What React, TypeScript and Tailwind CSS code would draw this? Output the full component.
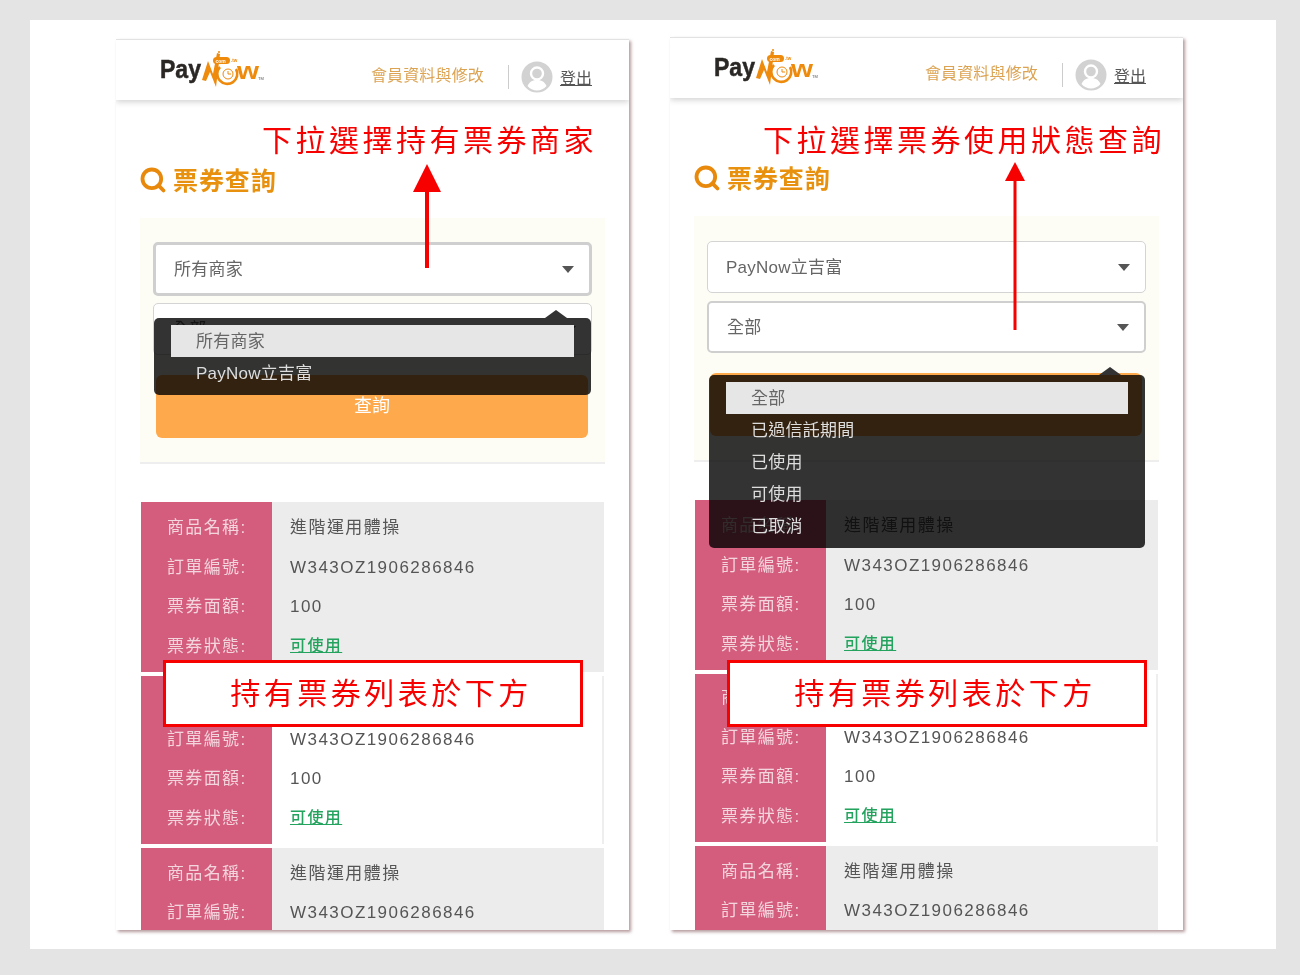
import { Search } from "lucide-react";

const cjk = "font-['Liberation_Sans','Noto_Sans_CJK_TC',sans-serif]";

function Logo() {
  return (
    <svg width="106" height="42" viewBox="0 0 106 42" className="block overflow-visible">
      <text x="0" y="30" fontFamily="Liberation Sans" fontWeight="700" fontSize="26" fill="#2a2725" stroke="#2a2725" strokeWidth="0.5" textLength="41" lengthAdjust="spacingAndGlyphs">Pay</text>
      <path d="M42 32 L48 13 L53 26 L57 5 L60 6 L56 39 L50 24 L46 33 Z" fill="#ee8a0c" />
      <path d="M60 19a10 10 0 1 0 16 2" fill="none" stroke="#ee8a0c" strokeWidth="2.6" />
      <circle cx="68" cy="26" r="5" fill="none" stroke="#ee8a0c" strokeWidth="1" />
      <path d="M68 23v3h3" fill="none" stroke="#ee8a0c" strokeWidth="1" />
      <rect x="53" y="9" width="17" height="7" rx="3.500" fill="#ee8a0c" />
      <text x="55.500" y="14.500" fontFamily="Liberation Sans" fontWeight="700" fontSize="5" fill="#fff">com</text>
      <text x="71" y="14" fontFamily="Liberation Sans" fontWeight="700" fontSize="4.500" fill="#ee8a0c">.tw</text>
      <circle cx="59" cy="4" r="1" fill="#ee8a0c" />
      <text x="77" y="31" fontFamily="Liberation Sans" fontWeight="700" fontSize="23" fill="#ee8a0c" textLength="22" lengthAdjust="spacingAndGlyphs">w</text>
      <text x="98" y="32" fontFamily="Liberation Sans" fontSize="4" fill="#555">TM</text>
    </svg>
  );
}

function Avatar() {
  return (
    <svg width="32" height="32" viewBox="0 0 32 32" className="block">
      <circle cx="16" cy="16" r="15.5" fill="#d2d2d2" />
      <circle cx="16" cy="12.5" r="6" fill="none" stroke="#fff" strokeWidth="2.4" />
      <path d="M6.5 25c2-4.500 5.500-6 9.500-6s7.500 1.500 9.500 6c-2.500 2.800-5.800 4.500-9.500 4.500S9 27.800 6.500 25Z" fill="#fff" />
    </svg>
  );
}

function Select({ label, state }: { label: string; state: "plain" | "big" | "focus" }) {
  const look =
    state === "big"
      ? "h-[54px] -mt-[1px] -mb-[1px] border-[3px] border-[#cfcfcf]"
      : state === "focus"
        ? "h-[52px] border-2 border-[#cfcfcf]"
        : "h-[52px] border border-[#d4d4d4]";
  return (
    <div className={`bg-white rounded-[5px] flex items-center justify-between pl-[18px] pr-[15px] text-[17px] tracking-[0.25px] text-[#666] ${look}`}>
      <span className="pt-[2px]">{label}</span>
      <span className="w-0 h-0 border-x-[6.5px] border-x-transparent border-t-[7px] border-t-[#555]" />
    </div>
  );
}

function Row({ k, v, link }: { k: string; v: string; link?: boolean }) {
  return (
    <div className="flex h-[39.7px] items-center">
      <div className="w-[131px] pl-[26px] text-[#f3d5dd] text-[17px] tracking-[1.35px] shrink-0">{k}:</div>
      <div className={`pl-[18px] ${link ? "text-[#23a35e] underline text-[16px] tracking-[1.4px] font-medium -mt-[2px]" : "text-[#555] text-[17px] tracking-[1.45px]"}`}>{v}</div>
    </div>
  );
}

function Card({ white, pt, clip }: { white?: boolean; pt: string; clip?: boolean }) {
  return (
    <div className={`relative ${white ? "bg-white border-r-2 border-[#eeeeee]" : "bg-[#ececec]"} ${pt} pb-[5px]`}>
      <div className="absolute left-0 top-0 bottom-0 w-[131px] bg-[#d45c7c]" />
      <div className="relative">
        <Row k="商品名稱" v="進階運用體操" />
        <Row k="訂單編號" v="W343OZ1906286846" />
        {!clip && <Row k="票券面額" v="100" />}
        {!clip && <Row k="票券狀態" v="可使用" link />}
      </div>
    </div>
  );
}

type Ann = {
  heading: string;
  headLeft: string;
  headTop: string;
  arrowLeft: string;
  head: number;
  shaft: string;
  ddLeft: string;
  ddTop: string;
  ddW: string;
  items: string[];
  boxLeft: string;
  boxTop: string;
  focusFirst?: boolean;
  first: string;
  second: string;
  frame: string;
};

function Phone(p: Ann) {
  const big = p.head === 28;
  return (
    <div className={`relative w-[513px] bg-white overflow-hidden shadow-[2px_2px_3px_rgba(140,100,105,0.65)] border-t border-[#e2e2e2] ${p.frame} ${cjk}`}>
      <header className="h-[60px] flex items-center pl-[44px] pr-[37px] shadow-[0_2px_6px_rgba(0,0,0,0.18)] relative">
        <div className="-mt-[2px]"><Logo /></div>
        <div className="ml-auto flex items-center mt-[14px]">
          <span className="text-[16px] tracking-[0.15px] text-[#dca352] -mt-[3px]">會員資料與修改</span>
          <span className="w-px h-[24px] bg-[#cccccc] ml-[24px] mr-[12px]" />
          <Avatar />
          <span className="ml-[7px] text-[16px] text-[#555] underline pt-[3px]">登出</span>
        </div>
      </header>
      <div className="h-[118px] pl-[24px] pt-[65px] flex items-start gap-[6px]">
        <Search size={28} strokeWidth={3.3} color="#e8890c" className="-ml-[1px] mt-[1px]" />
        <h1 className="text-[25px] leading-[32px] font-bold text-[#e8910f] tracking-[0.9px]">票券查詢</h1>
      </div>
      <section className="mx-[24px] bg-[#fdfdf5] border-b-2 border-[#eeeeee] px-[13px] pt-[25px] pb-[24px]">
        <Select label={p.first} state={p.focusFirst ? "big" : "plain"} />
        <div className="h-[8px]" />
        <Select label={p.second} state={p.focusFirst ? "plain" : "focus"} />
        <button className="mt-[20px] mx-[3px] w-[432px] h-[63px] rounded-[6px] bg-[#ffa94d] text-white text-[18px]">查詢</button>
      </section>
      <div className="mt-[38px] mx-[25px]">
        <Card pt="pt-[6px]" />
        <div className="h-[4px]" />
        <Card white pt="pt-[4px]" />
        <div className="h-[4px]" />
        <Card pt="pt-[6px]" clip />
      </div>

      <div className={`absolute ${p.headLeft} ${p.headTop} text-[#f60000] text-[30px] leading-[36px] tracking-[3.5px] whitespace-nowrap font-['Noto_Sans_CJK_TC',sans-serif]`}>{p.heading}</div>

      <div className={`absolute ${p.ddLeft} ${p.ddTop} ${p.ddW} rounded-[5px] bg-black/80 pt-[7px] pb-[6px] text-[17px] tracking-[0.25px] text-[#dddddd]`}>
        <span className="absolute -top-[8px] right-[24px] w-0 h-0 border-x-[11px] border-x-transparent border-b-[8px] border-b-[#333333]" />
        {p.items.map((t, i) => (
          <div key={t} className={`h-[32px] flex items-center pl-[25px] pt-[2px] mx-[17px] ${i === 0 ? "bg-[#e6e6e6] text-[#666]" : ""}`}>{t}</div>
        ))}
      </div>

      <svg className={`absolute ${p.arrowLeft} top-[124px] overflow-visible`} width="2" height="2">
        <path d={`M1 0 L${1 + p.head / 2} ${big ? 28 : 19} L${1 - p.head / 2} ${big ? 28 : 19} Z`} fill="#f60000" />
        <rect x={big ? -1 : -0.5} y="18" width={big ? 4 : 3} height={p.shaft} fill="#f60000" />
      </svg>

      <div className={`absolute ${p.boxLeft} ${p.boxTop} w-[420px] h-[67px] bg-white border-[3px] border-[#f60000] flex items-center justify-center pl-[16px] pb-[4px] text-[#f60000] text-[30px] tracking-[3.5px] font-['Noto_Sans_CJK_TC',sans-serif]`}>持有票券列表於下方</div>
    </div>
  );
}

export default function App() {
  return (
    <div className="w-[1300px] h-[975px] bg-[#e4e4e4] pt-[20px] pl-[30px]">
      <main className="w-[1246px] h-[929px] bg-white flex items-start [filter:blur(0.45px)]">
        <Phone
          frame="ml-[86px] mt-[19px] h-[891px]"
          heading="下拉選擇持有票券商家"
          headLeft="left-[146px]"
          headTop="top-[80px]"
          arrowLeft="left-[310px]"
          head={28}
          shaft="86"
          ddLeft="left-[38px]"
          ddTop="top-[278px]"
          ddW="w-[437px]"
          items={["所有商家", "PayNow立吉富"]}
          boxLeft="left-[47px]"
          boxTop="top-[620px]"
          focusFirst
          first="所有商家"
          second="全部"
        />
        <Phone
          frame="ml-[41px] mt-[17px] h-[893px]"
          heading="下拉選擇票券使用狀態查詢"
          headLeft="left-[93px]"
          headTop="top-[82px]"
          arrowLeft="left-[344px]"
          head={20}
          shaft="150"
          ddLeft="left-[39px]"
          ddTop="top-[337px]"
          ddW="w-[436px]"
          items={["全部", "已過信託期間", "已使用", "可使用", "已取消"]}
          boxLeft="left-[57px]"
          boxTop="top-[622px]"
          first="PayNow立吉富"
          second="全部"
        />
      </main>
    </div>
  );
}
